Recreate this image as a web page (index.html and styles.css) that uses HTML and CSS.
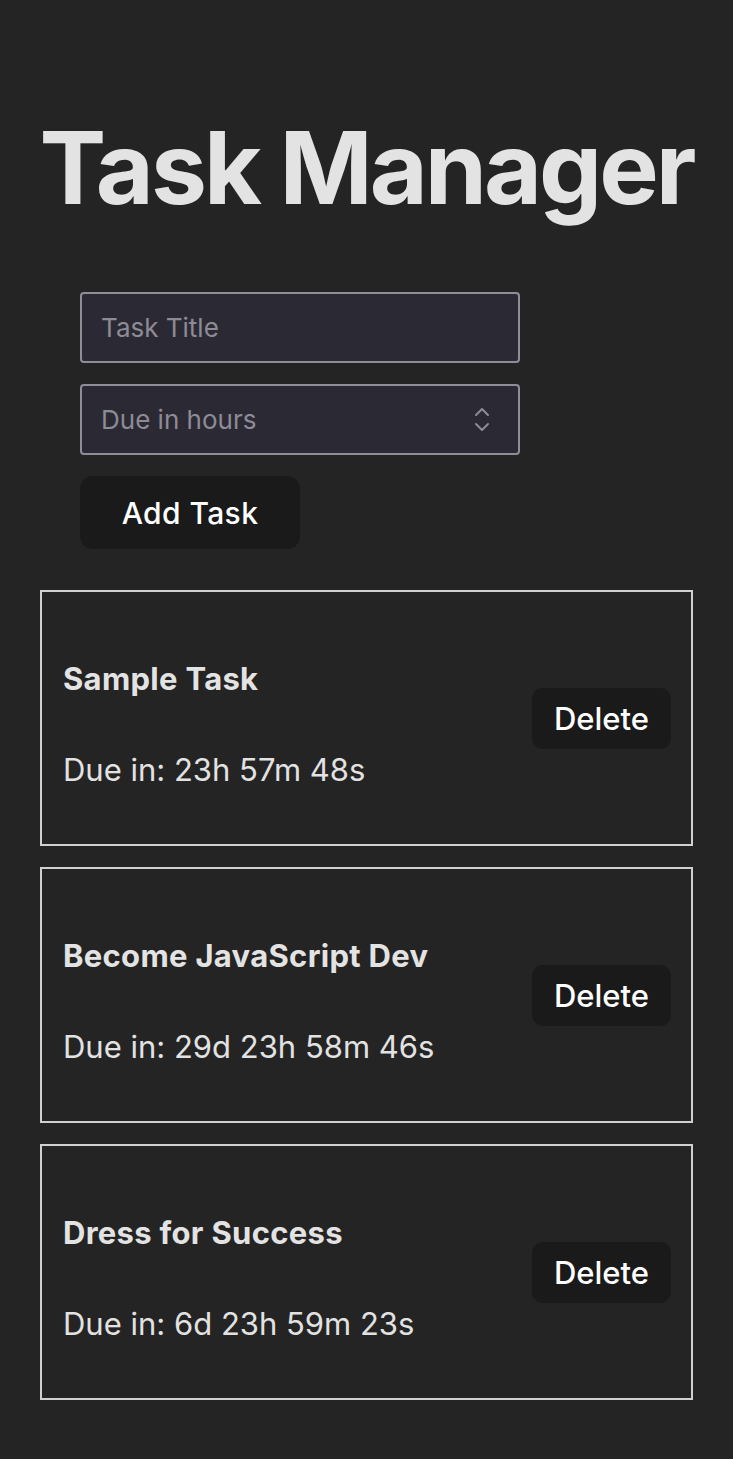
FILE: index.html
```html
<!DOCTYPE html>
<html lang="en">
<head>
<meta charset="utf-8">
<title>Task Manager</title>
<link rel="stylesheet" href="styles.css">
</head>
<body>
<div class="app">
  <h1 class="title">Task Manager</h1>
  <form class="task-form">
    <input class="field" type="text" placeholder="Task Title">
    <div class="number-wrap">
      <input class="field field-number" type="number" placeholder="Due in hours">
      <svg class="spinner" width="16" height="26" viewBox="0 0 16 26" aria-hidden="true">
        <path d="M2 8 L8 2 L14 8" fill="none" stroke="#8d8b96" stroke-width="2" stroke-linecap="round" stroke-linejoin="round"/>
        <path d="M2 17 L8 23 L14 17" fill="none" stroke="#8d8b96" stroke-width="2" stroke-linecap="round" stroke-linejoin="round"/>
      </svg>
    </div>
    <button class="btn btn-add" type="button">Add Task</button>
  </form>
  <ul class="task-list">
    <li class="task-card">
      <div class="task-info">
        <h3 class="task-name">Sample Task</h3>
        <p class="task-due">Due in: 23h 57m 48s</p>
      </div>
      <button class="btn btn-delete" type="button">Delete</button>
    </li>
    <li class="task-card">
      <div class="task-info">
        <h3 class="task-name">Become JavaScript Dev</h3>
        <p class="task-due">Due in: 29d 23h 58m 46s</p>
      </div>
      <button class="btn btn-delete" type="button">Delete</button>
    </li>
    <li class="task-card">
      <div class="task-info">
        <h3 class="task-name">Dress for Success</h3>
        <p class="task-due">Due in: 6d 23h 59m 23s</p>
      </div>
      <button class="btn btn-delete" type="button">Delete</button>
    </li>
  </ul>
</div>
</body>
</html>
```

FILE: styles.css
```css
* { box-sizing: border-box; }

html, body {
  margin: 0;
  padding: 0;
  background: #242424;
}

body {
  font-family: Inter, "Noto Sans", "Liberation Sans", sans-serif;
  color: #e2e2e2;
}

.app {
  padding: 0 40px 40px;
}

.title {
  margin: 113px -40px 0;
  font-size: 100px;
  line-height: 110px;
  font-weight: 700;
  text-align: center;
  white-space: nowrap;
  letter-spacing: -3px;
  color: #e3e3e3;
}

.task-form {
  margin: 69px 0 0;
  padding: 0 40px;
  display: flex;
  flex-direction: column;
  align-items: flex-start;
  gap: 21px;
}

.field {
  width: 440px;
  height: 71px;
  padding: 0 19px;
  border: 2px solid #8f8d99;
  border-radius: 4px;
  background: #2b2a34;
  color: #e2e2e2;
  font-family: inherit;
  font-size: 26px;
  outline: none;
}

.field::placeholder {
  color: #8d8b95;
}

.number-wrap {
  position: relative;
  width: 440px;
  height: 71px;
}

.field-number {
  -moz-appearance: textfield;
  appearance: textfield;
}

.field-number::-webkit-inner-spin-button,
.field-number::-webkit-outer-spin-button {
  -webkit-appearance: none;
  margin: 0;
}

.spinner {
  position: absolute;
  left: 394px;
  top: 23px;
  pointer-events: none;
}

.btn {
  border: none;
  background: #1a1a1a;
  color: #ffffff;
  font-family: inherit;
  font-weight: 500;
  cursor: pointer;
}

.btn-add {
  width: 220px;
  height: 73px;
  border-radius: 13px;
  font-size: 30px;
  letter-spacing: 0.4px;
  padding: 0;
}

.task-list {
  list-style: none;
  margin: 41px 0 0;
  padding: 0;
  display: flex;
  flex-direction: column;
  gap: 21px;
}

.task-card {
  display: flex;
  justify-content: space-between;
  align-items: center;
  border: 2px solid #d0d0d0;
  padding: 0 20px 0 21px;
}

.task-info {
  display: flex;
  flex-direction: column;
  padding: 69px 0 56px;
}

.task-name {
  margin: 0;
  font-size: 31px;
  line-height: 36px;
  font-weight: 700;
  letter-spacing: 0.3px;
  color: #e3e3e3;
}

.task-due {
  margin: 55px 0 0;
  font-size: 31px;
  line-height: 36px;
  font-weight: 400;
  color: #e2e2e2;
}

.btn-delete {
  height: 61px;
  padding: 0 22px;
  border-radius: 11px;
  font-size: 31px;
}
```
